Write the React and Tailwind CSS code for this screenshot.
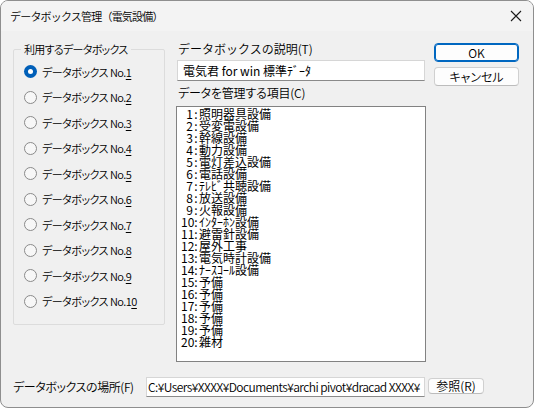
import React from 'react';

const items = [
  '照明器具設備', '受変電設備', '幹線設備', '動力設備', '電灯差込設備',
  '電話設備', 'ﾃﾚﾋﾞ共聴設備', '放送設備', '火報設備', 'ｲﾝﾀｰﾎﾝ設備',
  '避雷針設備', '屋外工事', '電気時計設備', 'ﾅｰｽｺｰﾙ設備', '予備',
  '予備', '予備', '予備', '予備', '雑材',
];

const uiFont = "font-['Noto_Sans_CJK_JP',sans-serif]";

const Radio = ({ n, checked }) => {
  const s = String(n);
  return (
    <div className="flex items-center h-[25.5px] pl-[10px]">
      {checked ? (
        <span className="flex items-center justify-center w-[13px] h-[13px] rounded-full bg-[#005fb8]">
          <span className="w-[5px] h-[5px] rounded-full bg-white" />
        </span>
      ) : (
        <span className="w-[13px] h-[13px] rounded-full border border-[#8a8a8a] bg-[#f7f7f7]" />
      )}
      <span className="ml-[5px] text-[11px] leading-[16px] text-black [font-feature-settings:'palt'] tracking-[-0.5px]">
        データボックス No.{s.slice(0, -1)}<u className="underline-offset-2">{s.slice(-1)}</u>
      </span>
    </div>
  );
};

export default function App() {
  return (
    <div className={`w-[534px] h-[409px] bg-white font-[350] ${uiFont}`}>
      <div className="w-[534px] h-[408px] rounded-lg border border-[#8e8e8e] bg-[#f0f0f0] overflow-hidden flex flex-col">
        {/* title bar */}
        <div className="h-[30px] flex items-center justify-between pl-[9px] pr-[10px] bg-[#f3f3f3] shrink-0">
          <span className="text-[11px] tracking-[-0.8px] text-black">データボックス管理（電気設備）</span>
          <svg width="12" height="12" viewBox="0 0 12 12" className="mr-[1px]">
            <path d="M1 1 L11 11 M11 1 L1 11" stroke="#1a1a1a" strokeWidth="1.1" fill="none" />
          </svg>
        </div>

        <div className="flex pl-[12px] mt-[10px]">
          {/* group box */}
          <fieldset className="w-[152px] h-[284px] border border-[#dcdcdc] rounded-[2px] px-0 pt-[2px]">
            <legend className="ml-[7px] px-[3px] text-[11px] leading-[16px] tracking-[-0.7px] text-black [font-feature-settings:'palt']">
              利用するデータボックス
            </legend>
            {Array.from({ length: 10 }, (_, i) => (
              <Radio key={i} n={i + 1} checked={i === 0} />
            ))}
          </fieldset>

          {/* middle column */}
          <div className="ml-[11px] w-[250px] flex flex-col">
            <div className="pl-[2px] text-[12px] leading-[16px] text-black">
              データボックスの説明(T)
            </div>
            <div className="mt-[3px] ml-[1px] w-[248px] h-[21px] bg-white border border-[#d6d6d6] border-b-[#8a8a8a] flex items-center pl-[5px] text-[12px] font-normal text-black">
              電気君 for win 標準ﾃﾞｰﾀ
            </div>
            <div className="mt-[4px] pl-[2px] text-[12px] leading-[16px] tracking-[-0.2px] text-black [font-feature-settings:'palt']">
              データを管理する項目(C)
            </div>
            <div className="mt-[5px] w-[250px] h-[256px] bg-white border border-[#828282] pt-[1px] pl-[4px] font-normal">
              {items.map((it, i) => (
                <div key={i} className="flex h-[12px] leading-[12px] text-[12px] text-black whitespace-nowrap">
                  <span className="w-[12px] text-right">{i + 1}</span>
                  <span className="w-[6px] text-center">:</span>
                  <span>{it}</span>
                </div>
              ))}
            </div>
          </div>

          {/* buttons */}
          <div className="ml-[8px] mt-[2px] w-[85px] flex flex-col gap-[5px]">
            <button className="h-[19px] rounded-[4px] border border-[#0067c0] bg-[#fdfdfd] text-[12px] leading-none text-black [box-shadow:inset_0_0_0_1px_#0067c0]">
              OK
            </button>
            <button className="h-[19px] rounded-[4px] border border-[#d0d0d0] border-b-[#bcbcbc] bg-[#fdfdfd] text-[12px] leading-none text-black [font-feature-settings:'palt']">
              キャンセル
            </button>
          </div>
        </div>

        {/* bottom row */}
        <div className="flex items-start mt-[15px] pl-[12px]">
          <span className="mt-[2px] text-[12px] leading-[16px] tracking-[-0.4px] text-black [font-feature-settings:'palt']">
            データボックスの場所(F)
          </span>
          <div className="ml-auto w-[279px] h-[20px] bg-white border border-[#d6d6d6] border-b-[#8a8a8a] flex items-center pl-[1px] overflow-hidden whitespace-nowrap text-[12px] text-black tracking-[-0.55px]">
            C:¥Users¥XXXX¥Documents¥archi pivot¥dracad XXXX¥
          </div>
          <button className="ml-[3px] mr-[49px] mt-[1px] w-[56px] h-[16px] rounded-[4px] border border-[#d0d0d0] border-b-[#bcbcbc] bg-[#fdfdfd] text-[12px] leading-none text-black">
            参照(R)
          </button>
        </div>
      </div>
    </div>
  );
}
